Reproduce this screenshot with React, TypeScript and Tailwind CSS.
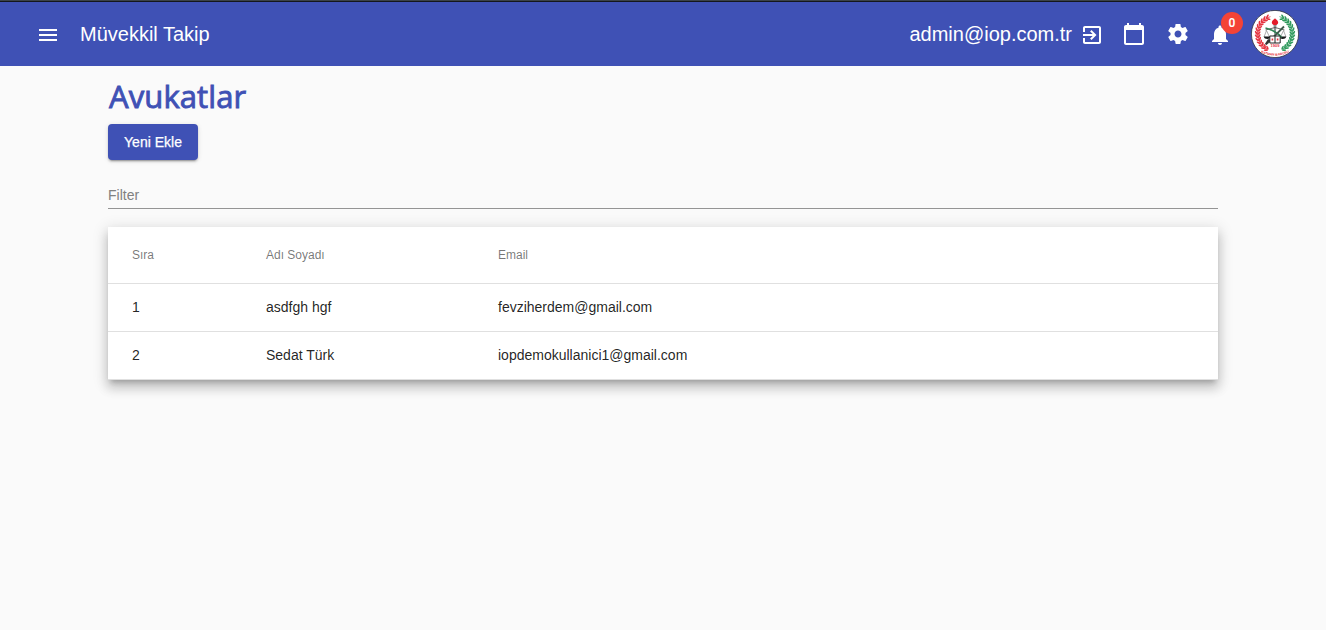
import type { ReactNode } from 'react';

const lawyers = [
  { no: 1, name: 'asdfgh hgf', email: 'fevziherdem@gmail.com' },
  { no: 2, name: 'Sedat Türk', email: 'iopdemokullanici1@gmail.com' },
];

function Icon({ children }: { children: ReactNode }) {
  return (
    <svg viewBox="0 0 24 24" className="block h-6 w-6 shrink-0" fill="currentColor">
      {children}
    </svg>
  );
}

const leaves = Array.from({ length: 13 }, (_, i) => 111 + i * 10.6);

function Leaf({ angle, mirrored, color }: { angle: number; mirrored?: boolean; color: string }) {
  const rad = (angle * Math.PI) / 180;
  const side = mirrored ? -1 : 1;
  const x = 24 + side * Math.cos(rad) * 17.4;
  const y = 23.6 - Math.sin(rad) * 17.4;
  const turn = mirrored ? angle - 180 : 180 - angle;
  return (
    <g transform={`translate(${x} ${y}) rotate(${turn})`} fill={color}>
      <ellipse cx="-1.7" cy="0" rx="0.9" ry="2.2" transform="rotate(-35)" />
      <ellipse cx="1.7" cy="0" rx="0.9" ry="2.2" transform="rotate(35)" />
      <rect x="-0.4" y="-1.8" width="0.8" height="3.6" />
    </g>
  );
}

function Emblem() {
  return (
    <svg viewBox="0 0 48 48" className="block h-12 w-12 shrink-0">
      <circle cx="24" cy="24" r="23.6" fill="#fff" stroke="#30343f" strokeWidth="0.8" />
      {leaves.map((a) => (
        <Leaf key={a} angle={a} color="#e5333f" />
      ))}
      {leaves.map((a) => (
        <Leaf key={a} angle={a} mirrored color="#2f9a5c" />
      ))}
      <path d="M24 8.2c1 1.3 3.2 2.2 3.2 4.2 0 1.2-.9 2-1.8 2.6h-2.8c-.9-.6-1.8-1.4-1.8-2.6 0-2 2.2-2.9 3.2-4.2z" fill="#e31b2b" />
      <path d="M22.5 15h3L24.7 25h-1.4z" fill="#8b8f92" />
      <path d="M14.5 20l9.5-2.5 9.5 2.5" fill="none" stroke="#444" strokeWidth="0.8" />
      <path d="M15.5 20.5L13 27M15.5 20.5l3 6.5M32.5 20.5l-3 6.5M32.5 20.5L35 27" stroke="#777" strokeWidth="0.6" />
      <path d="M12.8 26.5h7c-.4 1.8-1.7 2.5-3.5 2.5s-3.1-.7-3.5-2.5zM28.2 26.5h7c-.4 1.8-1.7 2.5-3.5 2.5s-3.1-.7-3.5-2.5z" fill="#17191a" />
      <path d="M14.5 18c4.5 1 12.5 4.5 16 9.5" fill="none" stroke="#2f8555" strokeWidth="1.7" />
      <path d="M33 16.5L16 33.5" stroke="#3f5a4c" strokeWidth="1.8" />
      <path d="M14.8 34.5l3.2-5" stroke="#333" strokeWidth="2.2" />
      <path d="M18.8 26h10.4v7H18.8z" fill="#fff" stroke="#222" strokeWidth="1" />
      <path d="M24 26v7" stroke="#222" strokeWidth="1" />
      <path d="M20.6 28.5h1.6v2h-1.6zM25.8 28.5h1.6v2h-1.6z" fill="#e5333f" />
      <text x="24" y="37.4" textAnchor="middle" fill="#e5333f" className="font-['Liberation_Sans'] text-[4px] font-bold">
        1909
      </text>
      <path id="emblem-arc" d="M9.5 42.3Q24 49 38.5 42.3" fill="none" />
      <text fill="#e5333f" className="font-['Liberation_Sans'] text-[3.3px] font-bold">
        <textPath href="#emblem-arc" startOffset="50%" textAnchor="middle">
          BATMAN BAROSU
        </textPath>
      </text>
    </svg>
  );
}

export default function App() {
  return (
    <div className="min-h-[630px] bg-[#fafafa] font-['Liberation_Sans',Arial,sans-serif] text-black/87">
      <div className="h-px bg-[#3b4248]" />
      <div className="h-px bg-[#14171c]" />
      <header className="flex h-16 items-center bg-[#3f51b5] pr-[27px] pl-9 text-white">
        <button className="mt-[2px] block" aria-label="Menu">
          <Icon>
            <path d="M3 18h18v-2H3v2zm0-5h18v-2H3v2zm0-7v2h18V6H3z" />
          </Icon>
        </button>
        <span className="ml-5 text-xl leading-8">Müvekkil Takip</span>
        <div className="ml-auto flex items-center">
          <span className="text-xl leading-8">admin@iop.com.tr</span>
          <button className="mt-[2px] ml-2 block" aria-label="Exit">
            <Icon>
              <path d="M10.09 15.59L11.5 17l5-5-5-5-1.41 1.41L12.67 11H3v2h9.67l-2.58 2.59zM19 3H5c-1.11 0-2 .9-2 2v4h2V5h14v14H5v-4H3v4c0 1.1.89 2 2 2h14c1.1 0 2-.9 2-2V5c0-1.1-.9-2-2-2z" />
            </Icon>
          </button>
          <button className="ml-[18px] block" aria-label="Calendar">
            <Icon>
              <path d="M20 3h-1V1h-2v2H7V1H5v2H4c-1.1 0-2 .9-2 2v16c0 1.1.9 2 2 2h16c1.1 0 2-.9 2-2V5c0-1.1-.9-2-2-2zm0 18H4V8h16v13z" />
            </Icon>
          </button>
          <button className="ml-5 block" aria-label="Settings">
            <Icon>
              <path d="M19.43 12.98c.04-.32.07-.64.07-.98s-.03-.66-.07-.98l2.11-1.65c.19-.15.24-.42.12-.64l-2-3.46c-.12-.22-.39-.3-.61-.22l-2.49 1c-.52-.4-1.08-.73-1.69-.98l-.38-2.65C14.46 2.18 14.25 2 14 2h-4c-.25 0-.46.18-.49.42l-.38 2.65c-.61.25-1.17.59-1.69.98l-2.49-1c-.23-.09-.49 0-.61.22l-2 3.46c-.13.22-.07.49.12.64l2.11 1.65c-.04.32-.07.65-.07.98s.03.66.07.98l-2.11 1.65c-.19.15-.24.42-.12.64l2 3.46c.12.22.39.3.61.22l2.49-1c.52.4 1.08.73 1.69.98l.38 2.65c.03.24.24.42.49.42h4c.25 0 .46-.18.49-.42l.38-2.65c.61-.25 1.17-.59 1.69-.98l2.49 1c.23.09.49 0 .61-.22l2-3.46c.12-.22.07-.49-.12-.64l-2.11-1.65zM12 15.5c-1.93 0-3.5-1.57-3.5-3.5s1.57-3.5 3.5-3.5 3.5 1.57 3.5 3.5-1.57 3.5-3.5 3.5z" />
            </Icon>
          </button>
          <button className="relative mt-[2px] ml-[18px] block" aria-label="Notifications">
            <Icon>
              <path d="M12 22c1.1 0 2-.9 2-2h-4c0 1.1.89 2 2 2zm6-6v-5c0-3.07-1.64-5.64-4.5-6.32V4c0-.83-.67-1.5-1.5-1.5s-1.5.67-1.5 1.5v.68C7.63 5.36 6 7.92 6 11v5l-2 2v1h16v-1l-2-2z" />
            </Icon>
            <span className="absolute -top-[11px] left-[13px] h-[22px] w-[22px] rounded-full bg-[#f44336] text-center font-[Roboto,sans-serif] text-xs leading-[22px] font-semibold">
              0
            </span>
          </button>
          <div className="ml-[19px]">
            <Emblem />
          </div>
        </div>
      </header>

      <main className="mx-[108px] flex flex-col items-start pt-2">
        <h1 className="h-[50px] pl-px font-['Open_Sans',sans-serif] text-[31px] leading-[44px] font-normal tracking-[0.1px] text-[#3f51b5] [-webkit-text-stroke:0.9px_#3f51b5]">
          Avukatlar
        </h1>
        <button className="h-9 w-[90px] rounded bg-[#3f51b5] text-sm leading-9 font-medium text-white shadow-[0_3px_1px_-2px_rgba(0,0,0,0.2),0_2px_2px_0_rgba(0,0,0,0.14),0_1px_5px_0_rgba(0,0,0,0.12)] [-webkit-text-stroke:0.25px_white]">
          Yeni Ekle
        </button>
        <div className="mt-[18px] h-[31px] w-full border-b border-[#949494] pt-[9px]">
          <input
            type="text"
            placeholder="Filter"
            className="block h-4 w-full bg-transparent text-sm leading-4 outline-none placeholder:text-[#808080]"
          />
        </div>
        <div className="mt-[18px] w-full bg-white shadow-[0_5px_5px_-3px_rgba(0,0,0,0.2),0_8px_10px_1px_rgba(0,0,0,0.14),0_3px_14px_2px_rgba(0,0,0,0.12)]">
          <div className="grid h-[57px] grid-cols-[134px_232px_1fr] items-center border-b border-black/12 pl-6 text-xs text-black/54">
            <span>Sıra</span>
            <span>Adı Soyadı</span>
            <span>Email</span>
          </div>
          {lawyers.map((l) => (
            <div
              key={l.no}
              className="grid h-12 grid-cols-[134px_232px_1fr] items-center border-b border-black/12 pb-[2px] pl-6 text-sm"
            >
              <span>{l.no}</span>
              <span>{l.name}</span>
              <span>{l.email}</span>
            </div>
          ))}
        </div>
      </main>
    </div>
  );
}
